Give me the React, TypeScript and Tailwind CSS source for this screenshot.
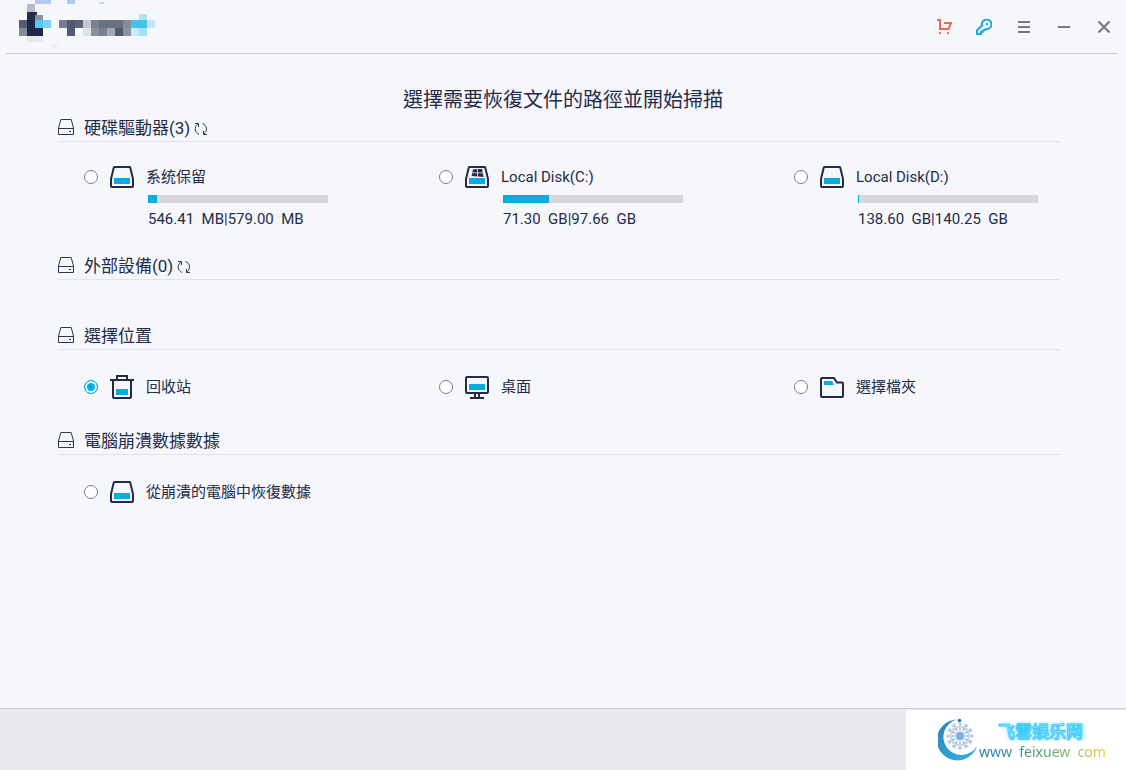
import React, { useState } from 'react';

type IconName = 'drive' | 'system' | 'trash' | 'desktop' | 'folder';

interface Source {
    id: string;
    name: string;
    icon: IconName;
    capacity?: string;
    percent?: number;
}

const DRIVES: Source[] = [
    { id: 'reserved', name: '系统保留', icon: 'drive', capacity: '546.41  MB|579.00  MB', percent: 5 },
    { id: 'c', name: 'Local Disk(C:)', icon: 'system', capacity: '71.30  GB|97.66  GB', percent: 25.6 },
    { id: 'd', name: 'Local Disk(D:)', icon: 'drive', capacity: '138.60  GB|140.25  GB', percent: 0.6 }
];

const LOCATIONS: Source[] = [
    { id: 'recycle', name: '回收站', icon: 'trash' },
    { id: 'desktop', name: '桌面', icon: 'desktop' },
    { id: 'folder', name: '選擇檔夾', icon: 'folder' }
];

const CRASHED: Source[] = [{ id: 'crashed', name: '從崩潰的電腦中恢復數據', icon: 'drive' }];

// x, y, width, height, color
const LOGO_BLOCKS: [number, number, number, number, string][] = [
    [35, 0, 16, 4, '#b3caee'],
    [67, 0, 8, 4, '#adc9f0'],
    [99, 2, 5, 2, '#cbd6ee'],
    [27, 4, 8, 8, '#b9bcc8'],
    [27, 12, 10, 8, '#252b4b'],
    [35, 15, 8, 5, '#8b90a0'],
    [139, 14, 8, 6, '#abe4f3'],
    [19, 20, 8, 8, '#565d74'],
    [27, 20, 8, 8, '#20274a'],
    [35, 20, 8, 8, '#55c9ee'],
    [43, 20, 8, 8, '#78d5f2'],
    [59, 20, 8, 8, '#767b8c'],
    [67, 20, 8, 8, '#52586f'],
    [75, 20, 8, 8, '#5d6276'],
    [83, 20, 8, 8, '#c3c8d2'],
    [91, 20, 8, 8, '#7b8191'],
    [99, 20, 24, 8, '#6a7080'],
    [123, 20, 8, 8, '#858b98'],
    [131, 20, 16, 8, '#47c3e8'],
    [147, 20, 8, 8, '#c0e6f7'],
    [19, 28, 8, 8, '#868b9b'],
    [27, 28, 16, 8, '#20274a'],
    [67, 28, 8, 8, '#525a73'],
    [83, 28, 8, 8, '#dfe3e8'],
    [91, 28, 8, 8, '#8a8e9f'],
    [99, 28, 8, 8, '#7a8090'],
    [107, 28, 8, 8, '#a5a9b5'],
    [115, 28, 8, 8, '#50586c'],
    [123, 28, 8, 8, '#8c929f'],
    [131, 28, 8, 8, '#c8ebf5'],
    [139, 28, 8, 8, '#a3e0f0'],
    [27, 36, 16, 6, '#e6e8ec'],
    [51, 44, 7, 3, '#edeff3']
];

const SourceIcon: React.FC<{ name: IconName }> = ({ name }) => (
    <svg className="size-6 shrink-0" viewBox="0 0 24 24" fill="none" stroke="#242b49" strokeWidth="2" aria-hidden="true">
        {(name === 'drive' || name === 'system') && (
            <>
                <path d="M4.6 2h14.8q.7 0 .9.7L23 14v7q0 1-1 1H2q-1 0-1-1v-7L3.7 2.7q.2-.7.9-.7z" />
                <rect x="4" y="13" width="16" height="6" fill="#06ade3" stroke="none" />
            </>
        )}
        {name === 'system' && (
            <path d="M8 4.6l4-.5v3.4H7.3zM12.8 4H17l.7 3.500h-4.900zM7.1 8.3H12v3.2l-5.400-.5zM12.8 8.3h5.100l.7 3.700-5.800-.5z" fill="#242b49" stroke="none" />
        )}
        {name === 'trash' && (
            <>
                <path d="M0 5h24M7 5V1h10v4M3 5v17q0 1 1 1h16q1 0 1-1V5" />
                <rect x="6" y="14" width="12" height="6" fill="#06ade3" stroke="none" />
            </>
        )}
        {name === 'desktop' && (
            <>
                <rect x="1" y="2" width="22" height="16" rx="1" />
                <path d="M10 18v5M14 18v5M5 23h14" />
                <rect x="4" y="9" width="16" height="6" fill="#06ade3" stroke="none" />
            </>
        )}
        {name === 'folder' && (
            <>
                <path d="M2 3h12l3 4.500h5q1 0 1 1V21q0 1-1 1H2q-1 0-1-1V4q0-1 1-1z" />
                <path d="M4 6h8l2 4H4z" fill="#06ade3" stroke="none" />
            </>
        )}
    </svg>
);

const SourceItem: React.FC<{ source: Source; checked: boolean; onSelect: (id: string) => void }> = ({
    source,
    checked,
    onSelect
}) => (
    <label className="flex items-start gap-3 cursor-pointer">
        <input
            type="radio"
            name="source"
            checked={checked}
            onChange={() => onSelect(source.id)}
            className="mt-[5px] size-3.5 shrink-0 appearance-none rounded-full border border-[#7b7c85] bg-white checked:border-[#06ade3] checked:bg-[#06ade3] checked:shadow-[inset_0_0_0_2px_white]"
        />
        <SourceIcon name={source.icon} />
        <span className="min-w-0">
            <span className="block text-[15px] leading-6 whitespace-nowrap">{source.name}</span>
            {source.capacity && (
                <>
                    <span className="mt-1.5 ml-0.5 block h-2 w-[180px] bg-[#d5d7db]">
                        <span className="block h-full bg-[#06ade3]" style={{ width: `${source.percent}%` }} />
                    </span>
                    <span className="mt-1.5 ml-0.5 block text-[15px] leading-5 whitespace-pre">{source.capacity}</span>
                </>
            )}
        </span>
    </label>
);

const SectionHeading: React.FC<{ title: string; refreshable?: boolean }> = ({ title, refreshable }) => (
    <div className="flex h-7 items-start border-b border-[#dfe2e7]">
        <svg className="mt-[5px] size-4 shrink-0" viewBox="0 0 16 16" fill="none" stroke="#30364f" aria-hidden="true">
            <path d="M2.8.5h10.400L15.500 9v6.500H.5V9zM.5 9.500h15M11 12.500h2" />
        </svg>
        <h2 className="ml-2.5 text-[17px] leading-7">{title}</h2>
        {refreshable && (
            <button type="button" aria-label="刷新" className="mt-2 ml-1 cursor-pointer">
                <svg className="size-3.5" viewBox="0 0 14 14" fill="none" stroke="#30364f" aria-hidden="true">
                    <path d="M5 12.500C.8 10.800-.4 5.500 3.800 2M1 1.500h3.500V5" />
                    <path d="M8.500 1.500C12.900 3 14 8.500 10 12M13 12.500H9.500V9" />
                </svg>
            </button>
        )}
    </div>
);

const WindowButton: React.FC<{ label: string; color: string; children: React.ReactNode }> = ({ label, color, children }) => (
    <button type="button" aria-label={label} className={`flex size-10 items-center justify-center cursor-pointer ${color}`}>
        <svg className="size-4" viewBox="0 0 16 16" fill="none" stroke="currentColor" strokeWidth="2" aria-hidden="true">
            {children}
        </svg>
    </button>
);

const Watermark: React.FC = () => (
    <div className="flex h-full w-[220px] bg-white pt-2 pl-8">
        <svg className="size-11 shrink-0" viewBox="0 0 44 44" fill="none" aria-hidden="true">
            <defs>
                <linearGradient id="moon" x1="0" y1="0" x2="1" y2="1">
                    <stop offset="0" stopColor="#2a86b5" />
                    <stop offset="1" stopColor="#35b0ee" />
                </linearGradient>
            </defs>
            <path d="M19 1.500A20.500 20.500 0 1 0 39 28A18 18 0 1 1 19 1.500z" fill="url(#moon)" />
            {Array.from({ length: 12 }, (_, i) => (
                <path
                    key={i}
                    d="M22 18V4M22 7.500l-2-2.500M22 7.500l2-2.500M22 11l-2.500-3M22 11l2.500-3"
                    stroke="#6d9bc8"
                    strokeWidth="0.6"
                    transform={`rotate(${i * 30} 22 18)`}
                />
            ))}
            <circle cx="22" cy="18" r="4" fill="#7db2e0" />
            <circle cx="21.500" cy="2.500" r="1.800" fill="#2479a8" />
        </svg>
        <div className="whitespace-nowrap">
            <p className="ml-4 mt-1 text-[17px] leading-5 font-medium text-[#c9f5ff] [-webkit-text-stroke:1px_#35c9fa] [text-shadow:0_0_3px_#7fe6ff,0_0_5px_#8feaff]">
                飞雪娱乐网
            </p>
            <p className="-ml-[3px] bg-linear-to-r from-[#1a7fae] via-[#4d9f76] to-[#e3d33c] bg-clip-text font-['Noto_Sans'] text-sm leading-5 whitespace-pre text-transparent">
                www  feixuew  com
            </p>
        </div>
    </div>
);

const App: React.FC = () => {
    const [selected, setSelected] = useState('recycle');

    const renderSources = (sources: Source[]) =>
        sources.map((source) => (
            <SourceItem key={source.id} source={source} checked={selected === source.id} onSelect={setSelected} />
        ));

    return (
        <div className="flex min-h-screen flex-col bg-[#f6f7fa] font-[Roboto,'Noto_Sans_CJK_TC',sans-serif] text-[#242b49]">
            {/* 標題欄 */}
            <header className="mr-2 ml-1.5 flex h-[54px] items-start justify-between border-b border-[#c9ccd2]">
                <svg className="-ml-1.5 h-12 w-40" viewBox="0 0 160 48" shapeRendering="crispEdges" aria-hidden="true">
                    {LOGO_BLOCKS.map(([x, y, w, h, fill]) => (
                        <rect key={`${x}-${y}`} x={x} y={y} width={w} height={h} fill={fill} />
                    ))}
                </svg>
                <div className="-mr-1.5 mt-[7px] flex">
                    <WindowButton label="購買" color="text-[#ee6a55]">
                        <path d="M1 1h3v9h8.500L15 4H8M3 14h2M11 14h2" />
                    </WindowButton>
                    <WindowButton label="註冊" color="text-[#1ba9dc]">
                        <path d="M1 15v-3.500l5-5a4.800 4.800 0 1 1 3.500 3.500L8 11.500H6.500V13H5v2z" />
                        <path d="M10 5h2" />
                    </WindowButton>
                    <WindowButton label="選單" color="text-[#767684]">
                        <path d="M2 3h12M2 8h12M2 13h12" />
                    </WindowButton>
                    <WindowButton label="最小化" color="text-[#767684]">
                        <path d="M2 8h12" />
                    </WindowButton>
                    <WindowButton label="關閉" color="text-[#767684]">
                        <path d="M2.500 2.500l11 11M13.500 2.500l-11 11" />
                    </WindowButton>
                </div>
            </header>

            {/* 掃描路徑 */}
            <main className="flex-1 pt-8">
                <h1 className="text-center text-xl leading-7">選擇需要恢復文件的路徑並開始掃描</h1>
                <div className="mr-[66px] ml-[58px]">
                    <section>
                        <SectionHeading title="硬碟驅動器(3)" refreshable />
                        <div className="grid grid-cols-3 gap-x-[89px] pt-[23px] pb-[23px] pl-[26px]">{renderSources(DRIVES)}</div>
                    </section>
                    <section className="pb-[42px]">
                        <SectionHeading title="外部設備(0)" refreshable />
                    </section>
                    <section>
                        <SectionHeading title="選擇位置" />
                        <div className="grid grid-cols-3 gap-x-[89px] pt-[25px] pb-7 pl-[26px]">{renderSources(LOCATIONS)}</div>
                    </section>
                    <section>
                        <SectionHeading title="電腦崩潰數據數據" />
                        <div className="grid grid-cols-3 gap-x-[89px] pt-[25px] pb-7 pl-[26px]">{renderSources(CRASHED)}</div>
                    </section>
                </div>
            </main>

            <footer className="flex h-[62px] justify-end border-t border-[#c9ccd2] bg-[#e9e8ed] pt-px">
                <Watermark />
            </footer>
        </div>
    );
};

export default App;
